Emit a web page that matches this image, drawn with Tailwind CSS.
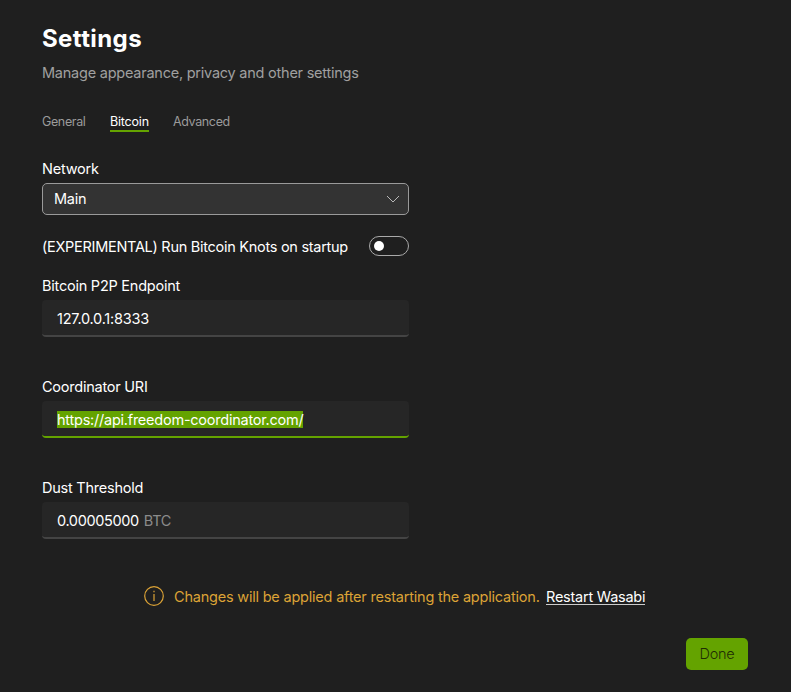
<!DOCTYPE html>
<html lang="en"><head><meta charset="utf-8"><title>Settings</title>
<script src="https://cdn.jsdelivr.net/npm/@tailwindcss/browser@4"></script></head>
<body class="bg-[#1f1f1f] text-white font-['Inter',sans-serif] text-[14.5px] tracking-[-0.235px] leading-[18px] font-[440]">
<main class="w-[791px] h-[692px] overflow-hidden flex flex-col px-[42px] whitespace-nowrap">
<header class="pt-[23px]">
<h1 class="text-2xl leading-8 font-bold tracking-[0.4px]">Settings</h1>
<p class="mt-[9px] text-[#a0a0a0]">Manage appearance, privacy and other settings</p>
</header>
<nav class="mt-[32px] flex gap-[24px] text-[12.5px] leading-4 text-[#9b9b9b] font-normal tracking-[-0.37px]">
<span class="w-11">General</span><span class="text-white border-b-2 border-[#64a300] h-[18px] w-[39px] tracking-[-0.2px]">Bitcoin</span><span>Advanced</span>
</nav>
<section class="w-[367px] mt-[28px] flex flex-col">
<label>Network</label>
<div class="mt-[5px] h-8 rounded-[5px] border border-[#9a9a9a] bg-[#333] flex items-center justify-between pl-[11px] pr-[8px]"><span>Main</span>
<svg class="w-[14px] h-[8px]" viewBox="0 0 14 8" fill="none" stroke="#b8b8b8"><path d="M1 1l6 6 6-6"/></svg></div>
<div class="mt-[21px] h-5 flex items-center justify-between"><span class="pt-[2px] tracking-[-0.28px]">(EXPERIMENTAL) Run Bitcoin Knots on startup</span>
<span class="w-10 h-5 rounded-full border border-[#aaa] flex items-center pl-1"><span class="size-[10px] rounded-full bg-white"></span></span></div>
<label class="mt-[21px]">Bitcoin P2P Endpoint</label>
<div class="mt-[5px] h-[37px] rounded-[4px] bg-[#262626] border-b-2 border-[#444] flex items-center px-[15px] pt-[2px]">127.0.0.1:8333</div>
<label class="mt-[41px]">Coordinator URI</label>
<div class="mt-[5px] h-[37px] rounded-[4px] bg-[#262626] border-b-2 border-[#64a300] flex items-center px-[15px] pt-[2px]"><span class="bg-[#64a300] leading-[17px]">https://api.freedom-coordinator.com/</span></div>
<label class="mt-[41px]">Dust Threshold</label>
<div class="mt-[5px] h-[37px] rounded-[4px] bg-[#262626] border-b-2 border-[#444] flex items-center px-[15px] pt-[2px] gap-[5px] tracking-[-0.36px]">0.00005000<span class="text-[#8b8b8b]">BTC</span></div>
</section>
<div class="mt-[47px] ml-[102px] h-5 flex items-center text-[#dca336]">
<svg class="size-5 mr-[10px]" viewBox="0 0 20 20" fill="none" stroke="currentColor" stroke-width="1.2"><circle cx="10" cy="10" r="9.3"/><path d="M10 8v7"/><path d="M10 4.8v1.4"/></svg>
<span class="pt-[2px] w-[366px] tracking-[-0.21px]">Changes will be applied after restarting the application.</span><span class="ml-[6px] pt-px"><span class="block h-[17px] leading-[18px] text-white border-b border-[#ccc]">Restart Wasabi</span></span></div>
<button class="mt-[32px] self-end mr-px w-[62px] h-8 rounded-[5px] bg-[#64a300] text-[#1f2d05] font-[350]">Done</button>
</main></body></html>
